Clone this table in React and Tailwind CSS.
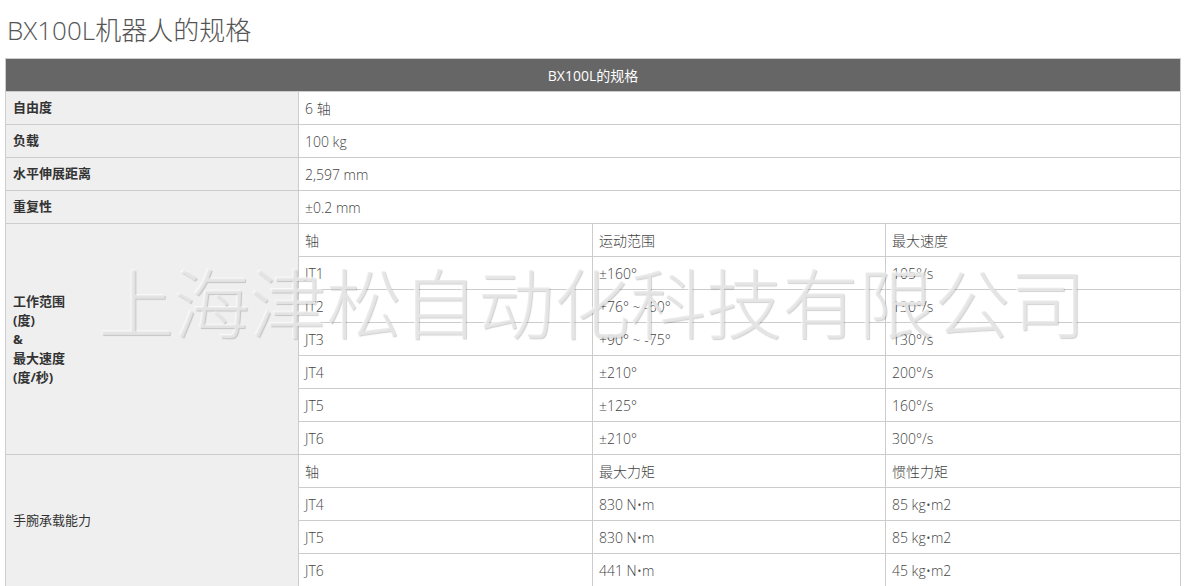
import React from 'react';

const FONT = { fontFamily: '"Open Sans", "Noto Sans CJK SC", sans-serif' };

const simpleRows = [
  ['自由度', '6 轴'],
  ['负载', '100 kg'],
  ['水平伸展距离', '2,597 mm'],
  ['重复性', '±0.2 mm'],
];

const rangeRows = [
  ['轴', '运动范围', '最大速度'],
  ['JT1', '±160°', '105°/s'],
  ['JT2', '+76° ~ -60°', '130°/s'],
  ['JT3', '+90° ~ -75°', '130°/s'],
  ['JT4', '±210°', '200°/s'],
  ['JT5', '±125°', '160°/s'],
  ['JT6', '±210°', '300°/s'],
];

const wristRows = [
  ['轴', '最大力矩', '惯性力矩'],
  ['JT4', '830 N•m', '85 kg•m2'],
  ['JT5', '830 N•m', '85 kg•m2'],
  ['JT6', '441 N•m', '45 kg•m2'],
];

const labelCls = 'border border-[#cccccc] bg-[#efefef] px-[7px] text-[13px] text-[#333333] align-middle';
const cellCls = 'border border-[#cccccc] bg-white px-[6px] h-[33px] text-[14px] font-light text-[#444444] align-middle';

function Group({ label, rows, bold = true }) {
  return rows.map((r, i) => (
    <tr key={i}>
      {i === 0 && (
        <td rowSpan={rows.length} className={labelCls + (bold ? ' font-bold' : ' font-normal')}>
          {label}
        </td>
      )}
      <td className={cellCls}>{r[0]}</td>
      <td className={cellCls}>{r[1]}</td>
      <td className={cellCls}>{r[2]}</td>
    </tr>
  ));
}

export default function App() {
  return (
    <div className="w-[1184px] h-[586px] overflow-hidden bg-white relative" style={FONT}>
      <h1 className="pl-[7px] pt-[13px] h-[58px] text-[26px] font-light text-[#555555] leading-[34px]">
        BX100L机器人的规格
      </h1>

      <table className="ml-[5px] w-[1175px] border-collapse table-fixed">
        <colgroup>
          <col className="w-[293px]" />
          <col className="w-[294px]" />
          <col className="w-[293px]" />
          <col className="w-[295px]" />
        </colgroup>
        <tbody>
          <tr>
            <td colSpan={4} className="border border-[#cccccc] bg-[#666666] h-[33px] text-center text-[14px] font-normal text-white">
              BX100L的规格
            </td>
          </tr>
          {simpleRows.map(([k, v]) => (
            <tr key={k}>
              <td className={labelCls + ' font-bold h-[33px]'}>{k}</td>
              <td colSpan={3} className={cellCls}>{v}</td>
            </tr>
          ))}
          <Group
            label={
              <span className="block leading-[19px]">
                工作范围<br />(度)<br />&amp;<br />最大速度<br />(度/秒)
              </span>
            }
            rows={rangeRows}
          />
          <Group label="手腕承载能力" rows={wristRows} bold={false} />
        </tbody>
      </table>

      {/* watermark */}
      <div
        className="absolute left-[98px] top-[252px] pointer-events-none select-none whitespace-nowrap text-[76px] leading-[96px] text-[rgba(232,232,232,0.8)]"
        style={{
          fontFamily: '"Noto Sans CJK SC", sans-serif',
          fontWeight: 300,
          textShadow: '1px 1px 1px rgba(0,0,0,0.18), -1px -1px 0 rgba(255,255,255,0.6)',
        }}
      >
        上海津松自动化科技有限公司
      </div>
    </div>
  );
}
